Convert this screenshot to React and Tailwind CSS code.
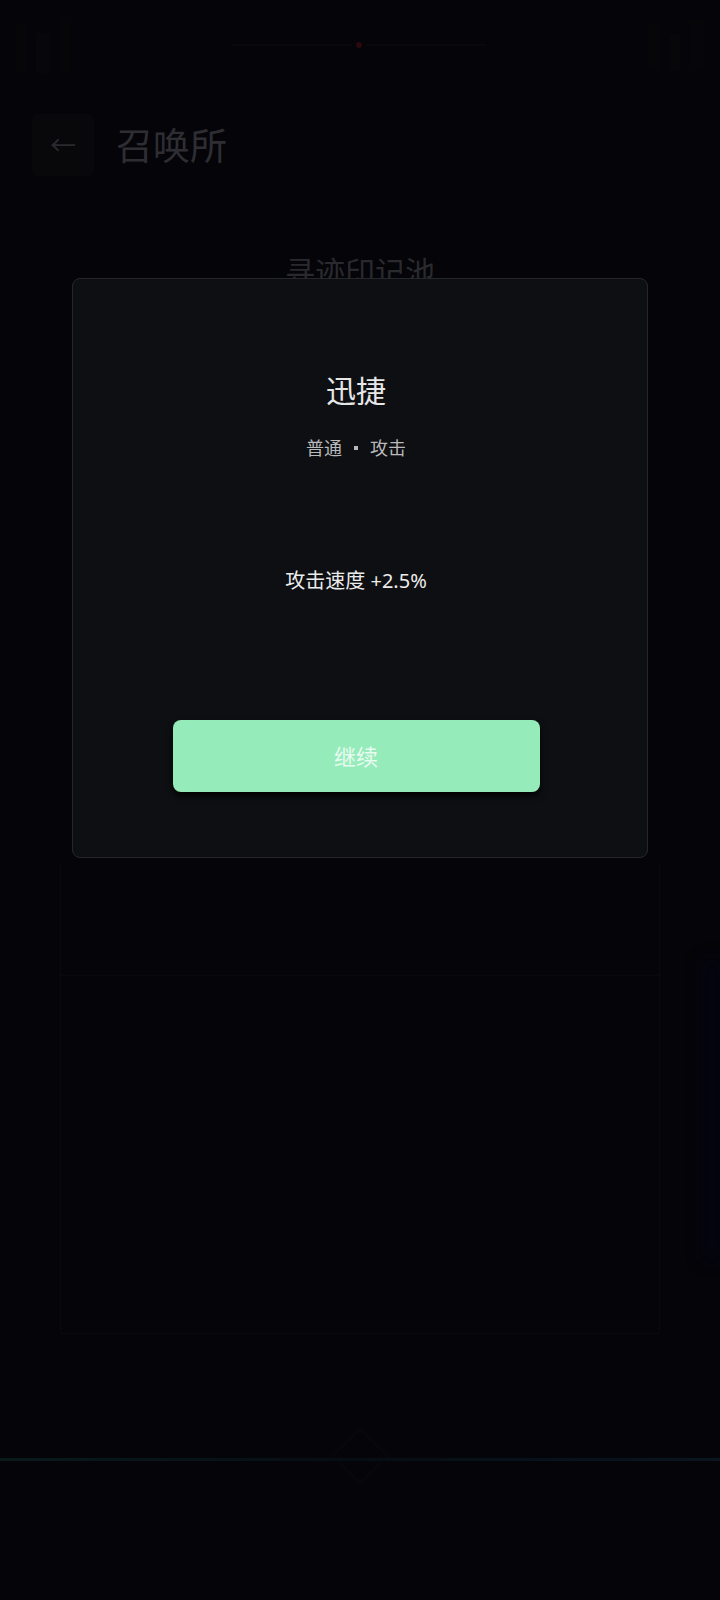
import React from 'react';

// 召唤所 page dimmed behind the "迅捷" reward dialog
export default function App() {
  const font = { fontFamily: '"Noto Sans", "Noto Sans CJK SC", sans-serif' };

  return (
    <div className="relative w-[720px] h-[1600px] overflow-hidden bg-[#040409]" style={font}>
      {/* dimmed page behind */}
      <div className="flex flex-col">
        {/* status / top bar remnants */}
        <div className="h-[90px] flex items-center justify-between px-[16px]">
          <div className="flex gap-[10px] items-end">
            <div className="w-[10px] h-[50px] bg-[#060609]" />
            <div className="w-[14px] h-[40px] bg-[#07070a]" />
            <div className="w-[10px] h-[55px] bg-[#060609]" />
          </div>
          <div className="flex items-center gap-[4px]">
            <div className="w-[120px] h-[2px] bg-[#09090d]" />
            <div className="w-[6px] h-[6px] rounded-full bg-[#2a080c]" />
            <div className="w-[120px] h-[2px] bg-[#0b080c]" />
          </div>
          <div className="flex gap-[10px] items-end">
            <div className="w-[12px] h-[45px] bg-[#060609]" />
            <div className="w-[10px] h-[35px] bg-[#07070a]" />
            <div className="w-[14px] h-[50px] bg-[#060609]" />
          </div>
        </div>

        {/* header */}
        <div className="flex items-center h-[110px] pl-[32px]">
          <div className="w-[62px] h-[62px] rounded-[6px] bg-[#08080b] flex items-center justify-center text-[26px] text-[#2a2a2e]">
            ←
          </div>
          <div className="ml-[22px] text-[37px] text-[#2e2e32] leading-none">召唤所</div>
        </div>

        {/* section title, half hidden behind the dialog */}
        <div className="mt-[55px] text-center text-[30px] leading-[34px] text-[#2a2a2e]">寻迹印记池</div>

        {/* dim pool panel */}
        <div className="mt-[575px] mx-[60px] h-[470px] border-x border-b border-[#09090e] flex flex-col">
          <div className="mt-[111px] h-px bg-[#09090f]" />
        </div>

        {/* bottom glow line */}
        <div className="mt-[124px] h-[3px] bg-gradient-to-r from-[#0a1a1b] via-[#060d14] to-[#0b1520]" />
      </div>

      {/* right edge glow */}
      <div className="absolute right-0 top-[960px] w-[16px] h-[300px] bg-[#050410] blur-[8px]" />

      {/* bottom diamond */}
      <div className="absolute left-[340px] top-[1436px] w-[40px] h-[40px] rotate-45 border border-[#070a13]" />

      {/* dialog */}
      <div className="absolute left-[72px] top-[278px] w-[576px] h-[580px] rounded-[8px] bg-[#0e0f12] border border-[#26272c] flex flex-col items-center pt-[94px] pr-[8px]">
        <div className="text-[30px] leading-[36px] text-[#e6e6e6]">迅捷</div>
        <div className="mt-[27px] text-[18px] leading-[24px] text-[#b9b9bb] flex items-center">
          <span>普通</span>
          <span className="mx-[12px] w-[4px] h-[4px] bg-[#b9b9bb]" />
          <span>攻击</span>
        </div>
        <div className="mt-[107px] text-[20px] leading-[28px] text-[#ececec]">攻击速度 +2.5%</div>
        <button className="mt-[125px] w-[367px] h-[72px] rounded-[8px] bg-[#95ebb9] text-[22px] text-white/80 shadow-[0_4px_6px_rgba(0,0,0,0.8)]">
          继续
        </button>
      </div>
    </div>
  );
}
